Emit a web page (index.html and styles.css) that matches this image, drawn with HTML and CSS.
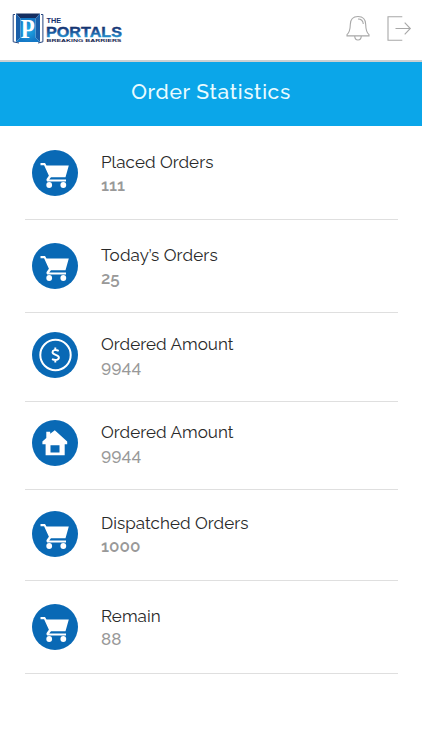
FILE: index.html
```html
<!DOCTYPE html>
<html lang="en">
<head>
  <meta charset="UTF-8" />
  <title>Order Statistics</title>
  <meta name="viewport" content="width=device-width, initial-scale=1" />
  <link rel="stylesheet" href="styles.css">
</head>
<body>
  <!-- shared icons -->
  <svg class="sprite" width="0" height="0">
    <symbol id="cart" viewBox="0 0 46 46">
      <path d="M8.5 13h4.5l1.5 2.6h22.3L33.5 27.2H19l-1.8 2.4H34v2H15.2q-1.6-1.4-.3-3l2-2.8-4.8-10.5H8.5z"/>
      <circle cx="17.2" cy="35" r="2.9"/>
      <circle cx="31.3" cy="35" r="2.9"/>
    </symbol>
  </svg>

  <header class="topbar">
    <svg class="logo" width="114" height="36" viewBox="0 0 114 36">
      <defs>
        <radialGradient id="door">
          <stop offset="0" stop-color="#1eabe8"/>
          <stop offset="1" stop-color="#1478c6"/>
        </radialGradient>
        <linearGradient id="word" x1="0" y1="0" x2="0" y2="1">
          <stop offset="0.2" stop-color="#152d68"/>
          <stop offset="0.5" stop-color="#1b5297"/>
          <stop offset="0.85" stop-color="#2496d2"/>
        </linearGradient>
      </defs>
      <path d="M3 4.5H1.2v27.3L7 33M29 4.5h1.9v27.3L26 33" fill="none" stroke="#24447e" stroke-width="1"/>
      <path d="M4 3.5h24l-4.5 5h-15z" fill="#142e61"/>
      <path d="M4 3.5l4.5 5v19L4 32zM28 3.5l-4.5 5v19L28 32z" fill="#1a5fa9"/>
      <path d="M8.5 8h15v19.5L28 32H4l4.5-4.5z" fill="url(#door)"/>
      <text x="8.8" y="27.5" class="logo-p" textLength="14" lengthAdjust="spacingAndGlyphs">P</text>
      <text x="34.5" y="13" class="logo-the" textLength="14.5" lengthAdjust="spacingAndGlyphs">THE</text>
      <text x="34" y="27" class="logo-name" textLength="76" lengthAdjust="spacingAndGlyphs">PORTALS</text>
      <text x="34.5" y="31.5" class="logo-tag" textLength="75" lengthAdjust="spacingAndGlyphs">BREAKING BARRIERS</text>
    </svg>
    <div class="actions">
      <svg width="24" height="27" viewBox="0 0 24 27">
        <path d="M12 1.5c-5 0-7.6 3.4-7.7 8-.1 5.5-.6 7.8-3.3 10.2v1.2h22v-1.2c-2.7-2.4-3.2-4.7-3.3-10.2-.1-4.6-2.7-8-7.7-8zM8.7 21c.1 2.6 1.3 4 3.3 4s3.2-1.4 3.3-4M12 4c3.1 0 5 1.8 5.3 5"/>
      </svg>
      <svg width="25" height="27" viewBox="0 0 25 27">
        <path d="M15.3 1.8H1v23.4h14.3M8.5 13.5H23M17.7 7.7l5.6 5.8-5.6 5.8"/>
      </svg>
    </div>
  </header>

  <h1 class="title"><span>Order Statistics</span></h1>

  <main class="stats">
    <div class="stat placed">
      <svg class="icon"><use href="#cart"/></svg>
      <div class="info">
        <h3>Placed Orders</h3>
        <p>111</p>
      </div>
    </div>
    <div class="stat today">
      <svg class="icon"><use href="#cart"/></svg>
      <div class="info">
        <h3>Today’s Orders</h3>
        <p>25</p>
      </div>
    </div>
    <div class="stat amount">
      <svg class="icon" viewBox="0 0 46 46">
        <circle cx="23.5" cy="23" r="15.2" fill="none" stroke="#fff" stroke-width="2"/>
        <path d="M23.3 15.5v2.3M23.3 28v2.5M26.7 18.8c-3.2-1.4-6.2-.7-6.2 1.5 0 3 6.4 2.3 6.4 5.3 0 2.4-3.5 3.1-6.9 1.5" fill="none" stroke="#fff" stroke-width="1.9"/>
      </svg>
      <div class="info">
        <h3>Ordered Amount</h3>
        <p class="lining">9944</p>
      </div>
    </div>
    <div class="stat home">
      <svg class="icon" viewBox="0 0 46 46">
        <path fill-rule="evenodd" d="M14.3 11.7h3.9v2.1l4.6-3.6 12.4 11.3v2.8h-2.5v11H13.6v-11h-3.2v-2.8l3.9-3.6zM18.5 25.3v7.2h9v-7.2z"/>
      </svg>
      <div class="info">
        <h3>Ordered Amount</h3>
        <p class="lining">9944</p>
      </div>
    </div>
    <div class="stat dispatched">
      <svg class="icon"><use href="#cart"/></svg>
      <div class="info">
        <h3>Dispatched Orders</h3>
        <p>1000</p>
      </div>
    </div>
    <div class="stat remain">
      <svg class="icon"><use href="#cart"/></svg>
      <div class="info">
        <h3>Remain</h3>
        <p class="lining">88</p>
      </div>
    </div>
  </main>
</body>
</html>
```
FILE: styles.css
```css
* {
  box-sizing: border-box;
}
body {
  font-family: Raleway, Lato, sans-serif;
  margin: 0;
  background: #fff;
}
.sprite {
  display: none;
}
.topbar {
  display: flex;
  justify-content: space-between;
  height: 62px;
  padding: 10px 10px 0 12px;
  border-bottom: 2px solid #cbd0d2;
}
.logo-p {
  font: bold 28px "Liberation Serif", serif;
  fill: #fff;
}
.logo-the {
  font: bold 7.5px "Liberation Sans", sans-serif;
  fill: #14306c;
}
.logo-name {
  font: bold 15.5px "Liberation Sans", sans-serif;
  fill: url(#word);
  stroke: url(#word);
  stroke-width: 0.4px;
}
.logo-tag {
  font: bold 3.8px "Liberation Sans", sans-serif;
  fill: #17264f;
}
.actions {
  display: flex;
  gap: 17px;
  padding-top: 5px;
}
.actions path {
  fill: none;
  stroke: #a8a8a8;
  stroke-width: 1.1;
}
.title {
  display: flex;
  justify-content: center;
  margin: 0;
  height: 64px;
  padding-top: 16px;
  background: #0ba6e9;
  color: #e9fbff;
  font-size: 21px;
  font-weight: 500;
  line-height: 28px;
  letter-spacing: 0.65px;
}
.stats {
  padding: 0 24px 0 25px;
}
.stat {
  display: flex;
  gap: 23px;
  padding-left: 7px;
  border-bottom: 1px solid #dfdfdf;
}
.placed {
  height: 94px;
  padding-top: 24px;
}
.today {
  height: 93px;
  padding-top: 23px;
}
.amount {
  height: 89px;
  padding-top: 19px;
}
.home {
  height: 88px;
  padding-top: 18px;
}
.dispatched {
  height: 91px;
  padding-top: 21px;
}
.remain {
  height: 93px;
  padding-top: 23px;
}
.icon {
  width: 46px;
  height: 46px;
  border-radius: 50%;
  background: #0969b5;
  fill: #fff;
}
.info h3 {
  margin: 0;
  color: #292929;
  font-size: 17px;
  font-weight: 400;
  line-height: 24px;
  letter-spacing: 0.05px;
}
.today h3 {
  letter-spacing: 0.15px;
}
.info p {
  margin: 0;
  color: #999;
  font-size: 17px;
  font-weight: 600;
  line-height: 22px;
}
.info .lining {
  font-weight: 500;
  line-height: 26px;
  font-variant-numeric: lining-nums;
}
.remain .lining {
  line-height: 23px;
}
```
